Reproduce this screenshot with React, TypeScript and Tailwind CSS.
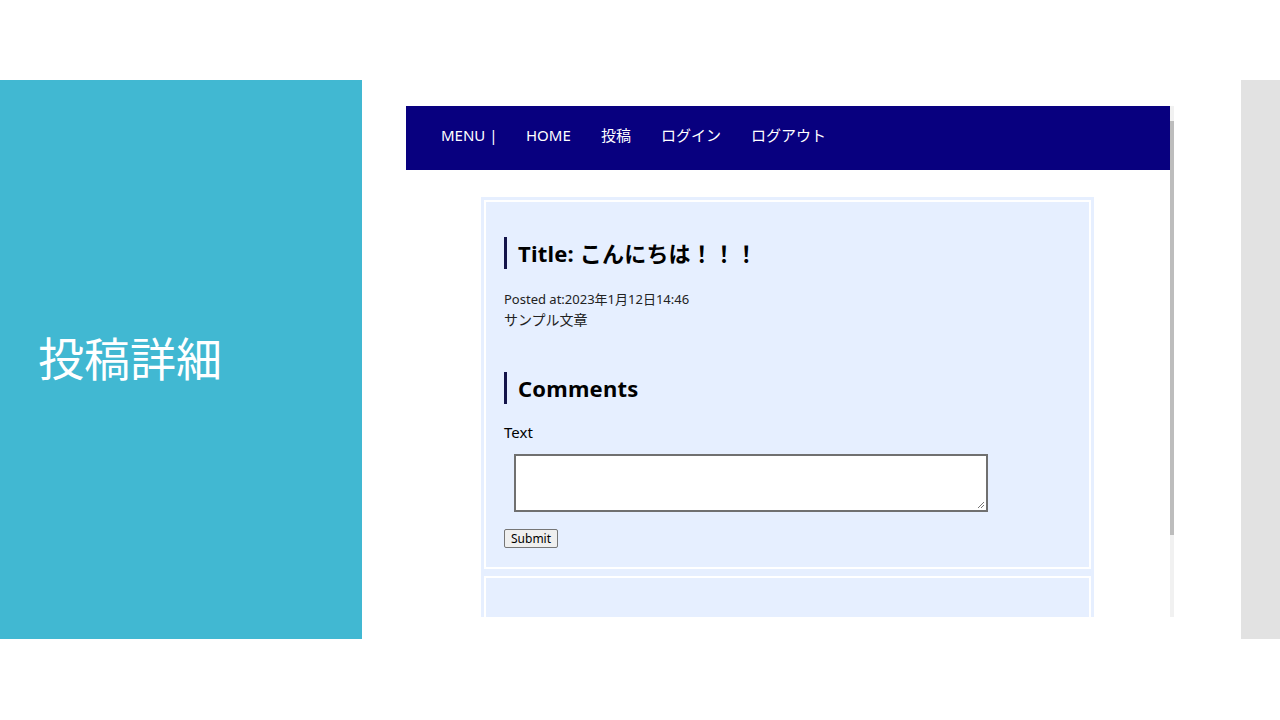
import React from "react";

const font = { fontFamily: '"Noto Sans", "Noto Sans CJK JP", sans-serif' };

function Heading({ children }: { children: React.ReactNode }) {
  return (
    <div className="flex items-center h-[32px] border-l-[3px] border-[#14144a] pl-[11px]">
      <span className="text-[22px] font-bold text-black leading-none tracking-[0.2px]">{children}</span>
    </div>
  );
}

export default function App() {
  const navItems: [string, string][] = [
    ["MENU |", "w-[85px]"],
    ["HOME", "w-[75px]"],
    ["投稿", "w-[60px]"],
    ["ログイン", "w-[90px]"],
    ["ログアウト", "w-[90px]"],
  ];
  return (
    <div className="w-[1280px] h-[720px] bg-white flex flex-col overflow-hidden" style={font}>
      <div className="h-[80px]" />
      <div className="h-[559px] flex">
        <div className="w-[362px] bg-[#41b8d2] flex items-center pl-[38px] pb-[7px]">
          <span className="text-white text-[46px] leading-none" style={{ fontFamily: '"Noto Sans CJK JP", sans-serif' }}>
            投稿詳細
          </span>
        </div>
        <div className="flex-1 bg-white pl-[44px] pt-[26px]">
          <div className="flex w-[768px] h-[511px]">
            <div className="w-[764px] flex flex-col">
              <div className="h-[64px] bg-[#08007f] flex items-center pl-[35px] pb-[6px]">
                {navItems.map(([t, w]) => (
                  <span key={t} className={`${w} text-white text-[15px] leading-none`}>
                    {t}
                  </span>
                ))}
              </div>
              <div className="flex-1 pl-[75px] pt-[27px]">
                <div className="w-[613px] h-[420px] bg-[#e6efff] pt-[3px] px-[3px] flex flex-col gap-[7px]">
                  <div className="border-2 border-white bg-[#e6efff] h-[369px] pl-[18px] pt-[35px] flex flex-col">
                    <Heading>Title: こんにちは！！！</Heading>
                    <div className="mt-[21px] text-[13px] leading-[18px] text-[#222]">Posted at:2023年1月12日14:46</div>
                    <div className="mt-[3px] text-[14px] leading-[18px] text-[#222]">サンプル文章</div>
                    <div className="mt-[43px]">
                      <Heading>Comments</Heading>
                    </div>
                    <div className="mt-[18px] text-[15px] leading-[20px] text-black">Text</div>
                    <div className="mt-[12px] ml-[10px] w-[474px] h-[58px] border-2 border-[#707070] bg-white relative">
                      <svg className="absolute right-[1px] bottom-[1px]" width="8" height="8" viewBox="0 0 8 8">
                        <path d="M7 1 L1 7 M7 4 L4 7" stroke="#777" strokeWidth="1" />
                      </svg>
                    </div>
                    <div className="mt-[17px] flex">
                      <button className="h-[19px] px-[6px] text-[12px] leading-none border border-[#767676] bg-[#efefef] rounded-[2px] text-black">
                        Submit
                      </button>
                    </div>
                  </div>
                  <div className="border-2 border-white border-b-0 bg-[#e6efff] flex-1" />
                </div>
              </div>
            </div>
            <div className="w-[4px] flex flex-col bg-[#f1f1f1]">
              <div className="h-[15px]" />
              <div className="h-[414px] bg-[#bdbdbd]" />
            </div>
          </div>
        </div>
        <div className="w-[39px] bg-[#e2e2e2]" />
      </div>
    </div>
  );
}
